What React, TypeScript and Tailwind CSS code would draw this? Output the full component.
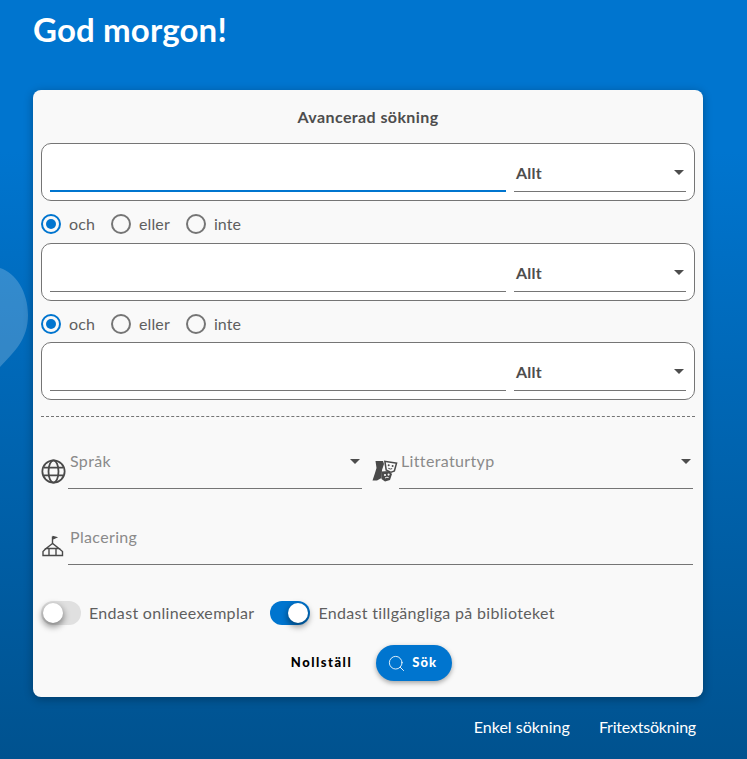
import { Search } from 'lucide-react';

const font = { fontFamily: 'Lato, "Noto Sans", sans-serif' };

function Caret({ className = '' }: { className?: string }) {
  return <span className={`h-0 w-0 border-x-[5px] border-t-[5px] border-x-transparent border-t-[#4d4d4d] ${className}`} />;
}

// Sökrad: fritextfält + "Allt"-väljare
function SearchRow({ active = false }: { active?: boolean }) {
  return (
    <div className="flex h-[58px] gap-2 rounded-[10px] border border-[#757575] bg-white pl-2 pr-2">
      <div className={`mt-auto mb-[8px] flex-1 ${active ? 'border-b-2 border-[#0075cf]' : 'border-b border-[#757575]'}`} />
      <div className="mt-auto mb-[8px] flex h-[38px] w-[172px] items-center justify-between border-b border-[#757575] pl-0.5 pr-[2px]">
        <span className="text-[16px] font-bold tracking-[0.2px] text-[#4d4d4d]">Allt</span>
        <Caret />
      </div>
    </div>
  );
}

function Radio({ label, checked = false }: { label: string; checked?: boolean }) {
  return (
    <div className="flex items-center gap-2">
      <span className={`flex h-5 w-5 items-center justify-center rounded-full border-2 ${checked ? 'border-[#0075cf]' : 'border-[#757575]'}`}>
        {checked && <span className="h-[10px] w-[10px] rounded-full bg-[#0075cf]" />}
      </span>
      <span className="text-[16px] tracking-[0.12px] text-[#5f5f5f]">{label}</span>
    </div>
  );
}

function RadioRow({ className }: { className: string }) {
  return (
    <div className={`flex items-center gap-4 pt-1 ${className}`}>
      <Radio label="och" checked />
      <Radio label="eller" />
      <Radio label="inte" />
    </div>
  );
}

function Globe() {
  return (
    <svg width="25" height="25" viewBox="0 0 24 24" fill="none" stroke="#4a4a4a" strokeWidth="1.7">
      <circle cx="12" cy="12" r="10.7" />
      <ellipse cx="12" cy="12" rx="4.8" ry="10.7" />
      <path d="M2.4 8.2h19.2M2.4 15.8h19.2" />
    </svg>
  );
}

function Masks() {
  return (
    <svg width="26" height="22" viewBox="0 0 26 22" fill="#4a4a4a">
      <path d="M3.5 1 11 1 12 4 10 10 9.5 18 5 20.5H0.5L3 13 4.5 8z" />
      <path d="M12 .5 25.5 2.5 23 11.5 19 13 13.5 10.5z" />
      <path d="M13.8 2.3 23.6 3.8 21.7 10.4 18.9 11.4 14.9 9.4z" fill="#fafafa" />
      <circle cx="16.7" cy="5.3" r="1" />
      <circle cx="20.6" cy="6" r="1" />
      <path d="M16.3 8.3q2.2 1.3 3.9.3" stroke="#4a4a4a" strokeWidth="1" fill="none" />
      <path d="M9.5 11.5 17 11 20 14 18 20 13 21.5 9.5 19z" />
      <circle cx="13" cy="15" r="1.1" fill="#fafafa" />
      <circle cx="16.6" cy="14.6" r="1.1" fill="#fafafa" />
      <path d="M13 18q2-1.4 3.6-.4" stroke="#fafafa" strokeWidth="1" fill="none" />
    </svg>
  );
}

function Venue() {
  return (
    <svg width="24" height="24" viewBox="0 1.5 24 24" fill="none" stroke="#4a4a4a" strokeWidth="1.4">
      <path d="M11.5 10V3M11.5 3l3.5 1-3.5 1.5" />
      <path d="M11.5 10 5 15h13z" />
      <path d="M5 15 2 18v4h19.5v-4L18 15M8 15v7M15 15v7" />
    </svg>
  );
}

function Field({ label, icon, caret = false, className = '' }: { label: string; icon: React.ReactNode; caret?: boolean; className?: string }) {
  return (
    <div className={`flex items-center ${className}`}>
      <div className="mt-[14px] flex w-[27px] shrink-0 justify-start">{icon}</div>
      <div className="flex h-[50px] flex-1 items-start justify-between border-b border-[#757575] pl-0.5 pt-[10px]">
        <span className="text-[16px] tracking-[0.35px] text-[#8a8a8a]">{label}</span>
        {caret && <Caret className="mt-[10px] mr-[2px]" />}
      </div>
    </div>
  );
}

function Toggle({ label, on = false }: { label: string; on?: boolean }) {
  return (
    <div className="flex items-center gap-2">
      <span className={`flex h-6 w-10 items-center rounded-full p-0.5 ${on ? 'justify-end bg-[#0075cf]' : 'justify-start bg-[#e0e0e0]'}`}>
        <span className="h-5 w-5 rounded-full bg-white shadow-[0_3px_6px_1px_rgba(0,0,0,0.4)]" />
      </span>
      <span className="text-[16px] tracking-[0.32px] text-[#5f5f5f]">{label}</span>
    </div>
  );
}

export default function App() {
  return (
    <div className="relative h-[759px] w-[747px] overflow-hidden bg-gradient-to-b from-[#0075cf] from-20% to-[#00528f] pl-[33px] pr-[44px]" style={font}>
      {/* Dekorativ form bakom kortet */}
      <svg className="absolute left-0 top-[268px]" width="30" height="100" viewBox="0 0 30 100" fill="#fff" fillOpacity="0.2">
        <path d="M0 0C16 5 28 24 28 47 28 72 14 84 0 99Z" />
      </svg>

      <h1 className="relative h-[90px] pt-2 text-[33px] leading-[42px] font-bold tracking-[0.15px] text-white">God morgon!</h1>

      <main className="relative h-[607px] rounded-lg bg-[#f9f9f9] px-2 shadow-[0_2px_10px_rgba(0,0,0,0.3)]">
        <h2 className="flex h-[53px] items-center justify-center text-[16px] font-bold tracking-[0.4px] text-[#4d4d4d]">Avancerad sökning</h2>
        <SearchRow active />
        <RadioRow className="h-[42px]" />
        <SearchRow />
        <RadioRow className="h-[41px]" />
        <SearchRow />
        <div className="mt-4 border-t border-dashed border-[#757575]" />
        <div className="mt-[22px] flex gap-[10px] pr-0.5">
          <Field label="Språk" icon={<Globe />} caret className="w-[321px]" />
          <Field label="Litteraturtyp" icon={<Masks />} caret className="flex-1" />
        </div>
        <Field label="Placering" icon={<Venue />} className="mt-[26px] pr-0.5" />
        <div className="mt-[36px] flex items-center gap-4">
          <Toggle label="Endast onlineexemplar" />
          <Toggle label="Endast tillgängliga på biblioteket" on />
        </div>
        <div className="mt-[20px] flex items-center justify-center gap-6 pl-[7px]">
          <button className="text-[13px] font-black tracking-[1.5px] text-black">Nollställ</button>
          <button className="flex h-9 w-[76px] items-center justify-center gap-[6px] rounded-full bg-[#0075cf] pr-1 text-[13px] font-black tracking-[1px] text-white shadow-[0_2px_5px_rgba(0,0,0,0.35)]">
            <Search size={19} strokeWidth={1.1} />
            Sök
          </button>
        </div>
      </main>

      <nav className="relative mt-[19px] flex justify-end gap-[29px] pr-[7px] text-[16px] leading-[22px] text-white">
        <span>Enkel sökning</span>
        <span className="tracking-[-0.2px]">Fritextsökning</span>
      </nav>
    </div>
  );
}
